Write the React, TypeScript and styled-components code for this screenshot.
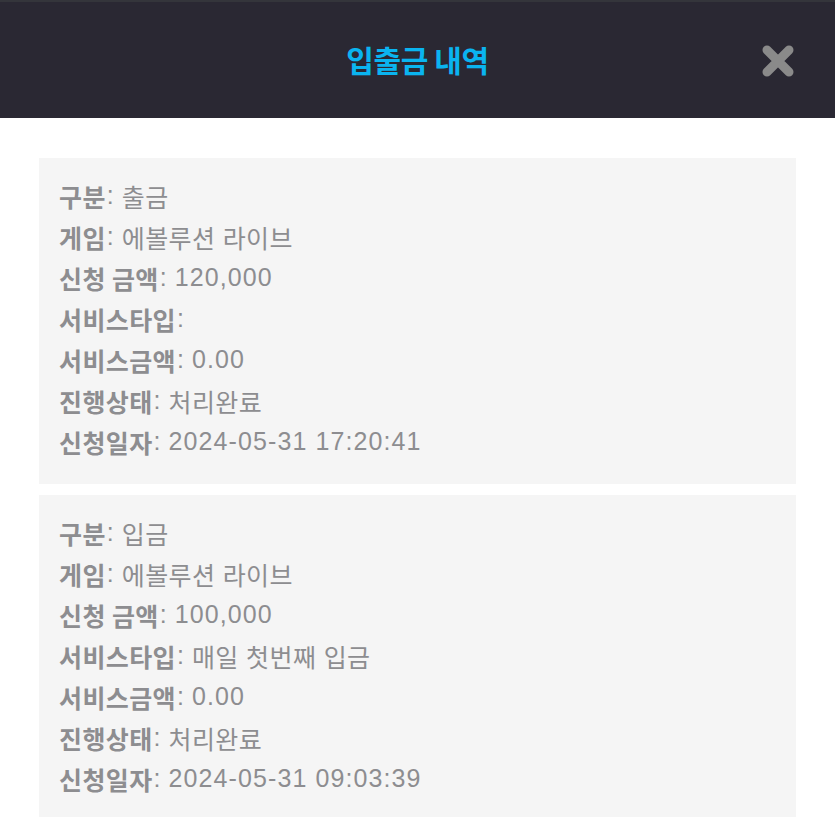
import React from "react";
import styled, { createGlobalStyle } from "styled-components";

const Global = createGlobalStyle`
  html, body { margin: 0; padding: 0; background: #ffffff; }
  body { font-family: "Noto Sans CJK KR", "Noto Sans", sans-serif; }
  * { box-sizing: border-box; }
`;

const Page = styled.div`
  width: 835px;
  min-height: 817px;
  background: #ffffff;
`;

const Header = styled.header`
  position: relative;
  height: 118px;
  background: #2a2833;
  border-top: 2px solid #34353b;
  display: flex;
  align-items: center;
  justify-content: center;
`;

const Title = styled.h1`
  margin: 0;
  font-family: "Noto Sans CJK KR", sans-serif;
  font-size: 30px;
  font-weight: 700;
  color: #0ab4f0;
  letter-spacing: -0.4px;
  margin-top: -3px;
`;

const CloseButton = styled.button`
  position: absolute;
  right: 40px;
  top: 42px;
  width: 34px;
  height: 34px;
  padding: 0;
  border: none;
  background: transparent;
  display: flex;
  align-items: center;
  justify-content: center;
`;

const List = styled.main`
  padding: 40px 39px 0 39px;
  display: flex;
  flex-direction: column;
  gap: 11px;
`;

const Card = styled.section`
  background: #f5f5f5;
  padding: 17px 20px 22px 20px;
  display: flex;
  flex-direction: column;
`;

const Row = styled.div`
  height: 41px;
  display: flex;
  align-items: center;
  font-size: 25px;
  color: #8d8d90;
  white-space: nowrap;
`;

const Label = styled.span`
  font-family: "Noto Sans CJK KR", sans-serif;
  font-weight: 700;
  letter-spacing: 0.4px;
`;

const Value = styled.span<{ $numeric: boolean }>`
  font-weight: 400;
  font-family: "Liberation Sans", "Noto Sans CJK KR", sans-serif;
  letter-spacing: ${(p) => (p.$numeric ? "1.1px" : "0.4px")};
`;

const Colon = styled.span`
  font-family: "Liberation Sans", sans-serif;
  font-weight: 400;
  margin-left: 1px;
  margin-right: 8px;
`;

type Item = [string, string];

const records: Item[][] = [
  [
    ["구분", "출금"],
    ["게임", "에볼루션 라이브"],
    ["신청 금액", "120,000"],
    ["서비스타입", ""],
    ["서비스금액", "0.00"],
    ["진행상태", "처리완료"],
    ["신청일자", "2024-05-31 17:20:41"],
  ],
  [
    ["구분", "입금"],
    ["게임", "에볼루션 라이브"],
    ["신청 금액", "100,000"],
    ["서비스타입", "매일 첫번째 입금"],
    ["서비스금액", "0.00"],
    ["진행상태", "처리완료"],
    ["신청일자", "2024-05-31 09:03:39"],
  ],
];

const CloseIcon = () => (
  <svg width="34" height="34" viewBox="0 0 34 34">
    <path
      d="M6 6 L28 28 M28 6 L6 28"
      stroke="#8a8a8a"
      strokeWidth="9"
      strokeLinecap="round"
    />
  </svg>
);

export default function App() {
  return (
    <Page>
      <Global />
      <Header>
        <Title>입출금 내역</Title>
        <CloseButton aria-label="close">
          <CloseIcon />
        </CloseButton>
      </Header>
      <List>
        {records.map((rec, i) => (
          <Card key={i}>
            {rec.map(([l, v]) => (
              <Row key={l}>
                <Label>{l}</Label>
                <Colon>:</Colon>
                <Value $numeric={/^[0-9]/.test(v)}>{v}</Value>
              </Row>
            ))}
          </Card>
        ))}
      </List>
    </Page>
  );
}
